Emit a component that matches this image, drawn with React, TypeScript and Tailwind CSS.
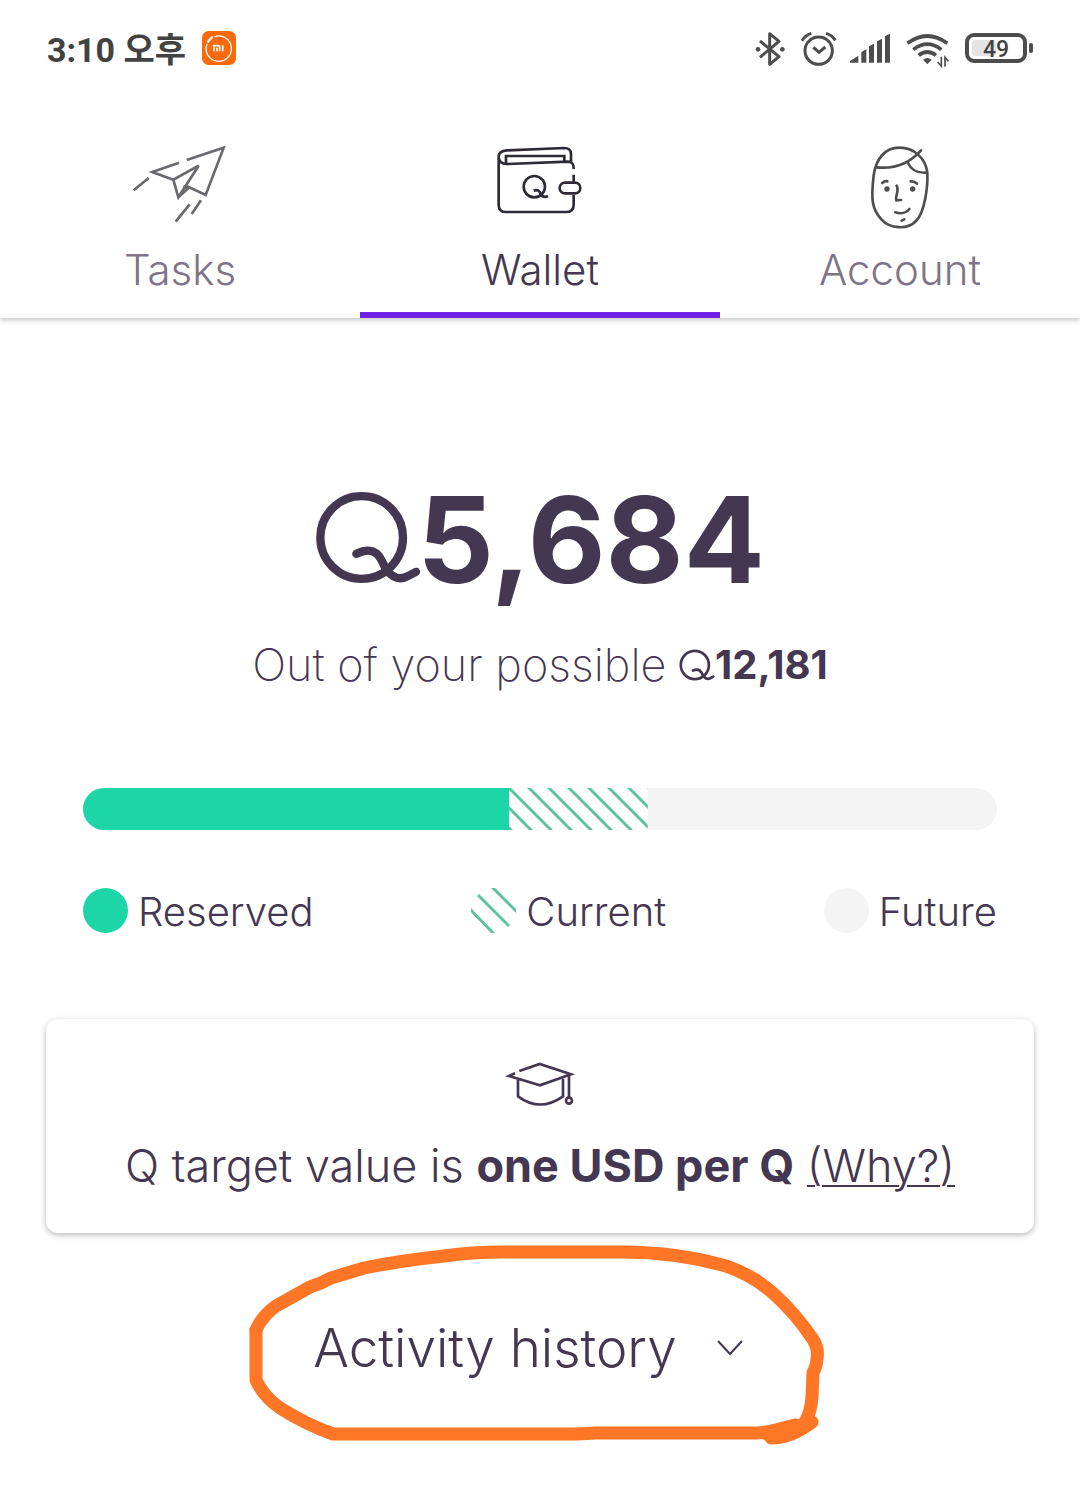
import React, { useState } from 'react';

const TOTAL = 12181;
const RESERVED = 5684;
const CURRENT = 1850;

const percent = (value: number) => `${(value / TOTAL) * 100}%`;

/* Currency mark, scales with its own height */
const QMark = ({ className, stroke }: { className: string; stroke: number }) => (
  <svg viewBox="42 50 318 278" className={className} fill="none" stroke="currentColor" strokeWidth={stroke} strokeLinecap="round" role="img" aria-label="Q">
    <circle cx="182" cy="189" r="124" />
    <path d="M166 238C205 220 228 228 243 260C262 305 290 322 322 304L345 292" />
  </svg>
);

const PlaneIcon = () => (
  <svg viewBox="0 0 360 300" className="w-[120px] h-[100px]" fill="none" stroke="#6b696f" strokeWidth="8" aria-hidden="true">
    <path d="M200 75L311 38L257 180L201 154" />
    <path d="M177 83L97 111L160 134L236 92L175 187L160 134" />
    <path d="M175 187L203 162L190 153" />
    <path d="M86 129L41 166M209 208L167 260M243 196L215 237" />
  </svg>
);

const WalletIcon = () => (
  <svg viewBox="0 0 330 270" className="w-[110px] h-[90px]" fill="none" stroke="#2f2a35" strokeWidth="8" aria-hidden="true">
    <path d="M41 66V209Q41 231 63 231H243Q266 231 266 209V180M266 143V119M266 102Q267 80 248 80L66 87Q41 87 41 66Q41 47 66 46L238 39Q257 39 258 56V80" />
    <path d="M63 84V63H238V78" />
    <rect x="224" y="143" width="62" height="32" rx="16" />
    <circle cx="148" cy="155" r="32" />
    <path d="M146 167C158 162 164 168 167 177Q174 190 189 183" />
  </svg>
);

const FaceIcon = () => (
  <svg viewBox="0 0 270 315" className="w-[90px] h-[105px]" fill="none" stroke="#4f4d50" strokeWidth="8" strokeLinecap="round" aria-hidden="true">
    <path d="M134 38C88 38 63 73 56 121C47 196 52 223 79 253C105 282 158 285 183 258C209 233 219 155 217 112C211 69 177 38 134 38Z" />
    <path d="M65 97C111 102 158 91 198 46M158 82C168 105 184 115 215 113" />
    <path d="M82 144Q89 137 97 139M167 139Q179 138 186 146M125 152C134 168 119 184 124 196L138 195M121 232C139 238 155 233 163 222M140 257L148 253" />
    <circle cx="96" cy="162" r="8" fill="#4f4d50" stroke="none" />
    <circle cx="173" cy="162" r="8" fill="#4f4d50" stroke="none" />
  </svg>
);

const CapIcon = () => (
  <svg viewBox="0 0 300 210" className="w-[100px] h-[70px]" fill="none" stroke="#443751" strokeWidth="8" aria-hidden="true">
    <path d="M88 63L149 42L243 73L150 106L57 78L75 70" />
    <path d="M84 90V139Q150 188 219 139V86M237 77V141" />
    <circle cx="237" cy="152" r="9" />
  </svg>
);

const StatusIcons = () => (
  <svg viewBox="0 0 627 195" className="w-[209px] h-[65px]" fill="none" stroke="#4d4d4d" strokeWidth="9" aria-hidden="true">
    {/* bluetooth */}
    <path d="M60 75L117 122L89 145V53L117 76L60 124" strokeLinejoin="round" />
    <circle cx="54" cy="100" r="7" fill="#4d4d4d" stroke="none" />
    <circle cx="127" cy="100" r="7" fill="#4d4d4d" stroke="none" />
    {/* alarm */}
    <circle cx="236" cy="104" r="41" />
    <path d="M220 94L237 109L256 93M186 74Q196 57 214 52M258 52Q276 57 286 73" />
    {/* signal */}
    <path
      d="M330 140V135L355 119V140ZM364 140V108L379 100V140ZM387 140V91L402 83V140ZM411 140V76L426 68V140ZM435 140V60L450 53V140Z"
      fill="#4d4d4d"
      stroke="none"
    />
    {/* wifi with data arrows */}
    <path d="M502 82Q562 38 622 82M520 101Q562 68 604 101M536 118Q562 98 588 118" strokeWidth="11" />
    <path d="M549 131Q562 121 575 131L562 145Z" fill="#4d4d4d" stroke="none" />
    <path d="M604 122V150L593 138M615 152V124L625 136" strokeWidth="5" />
  </svg>
);

const Stripes = () => (
  <svg className="w-full h-full" aria-hidden="true">
    <defs>
      <pattern id="stripes" width="20" height="20" patternUnits="userSpaceOnUse">
        <path d="M-5 -5L25 25M15 -5L25 5M-5 15L5 25" stroke="#5fc29f" strokeWidth="3" />
      </pattern>
    </defs>
    <rect width="100%" height="100%" fill="url(#stripes)" />
  </svg>
);

const tabs = [
  { name: 'Tasks', icon: <PlaneIcon /> },
  { name: 'Wallet', icon: <WalletIcon /> },
  { name: 'Account', icon: <FaceIcon /> },
];

const App = () => {
  const [activeTab, setActiveTab] = useState('Wallet');
  const [showHistory, setShowHistory] = useState(false);

  return (
    <div className="min-h-screen bg-white text-[#443751] font-['Inter',sans-serif]">
      {/* Status bar */}
      <div className="h-24 px-[47px] flex items-center justify-between text-[#424242]">
        <div className="flex items-center gap-4">
          <span className="pt-1 text-[34px] leading-[48px] font-bold font-['Roboto','Noto_Sans_CJK_KR',sans-serif]">
            3:10 오후
          </span>
          <svg viewBox="0 0 102 102" className="w-[34px] h-[34px]" fill="none" stroke="#fff" aria-hidden="true">
            <rect width="102" height="102" rx="20" fill="#fb6a0a" stroke="none" />
            <path d="M38 17A38 38 0 1 1 15 39" strokeWidth="4" />
            <path d="M18 32L30 19" strokeWidth="7" strokeLinecap="round" />
            <path d="M36 61V44H48Q53 44 53 49V61M45 50V61M62 43V61" strokeWidth="5" />
          </svg>
        </div>
        <div className="flex items-center gap-4">
          <StatusIcons />
          <div className="flex items-center gap-[2px]">
            <div className="w-[62px] h-[30px] rounded-[9px] border-4 border-[#4d4d4d] p-[3px]">
              <div className="w-6 h-4 bg-[#e4e4e4] rounded-sm">
                <span className="block w-12 text-center text-[23px] leading-5 font-medium font-['Roboto',sans-serif]">49</span>
              </div>
            </div>
            <div className="w-1 h-[10px] rounded-full bg-[#4d4d4d]" />
          </div>
        </div>
      </div>

      {/* Tabs */}
      <nav className="grid grid-cols-3 shadow-[0_3px_4px_rgba(0,0,0,0.18)]">
        {tabs.map((tab) => (
          <button
            key={tab.name}
            type="button"
            onClick={() => setActiveTab(tab.name)}
            className={`h-[222px] pt-[39px] flex flex-col items-center border-b-6 ${activeTab === tab.name ? 'border-[#7421e6] text-[#443751]' : 'border-transparent text-[#7d7585]'}`}
          >
            <span className="h-[105px]">{tab.icon}</span>
            <span className="mt-[6px] text-[42px] leading-[48px] font-light">{tab.name}</span>
          </button>
        ))}
      </nav>

      <main>
        {/* Balance */}
        <h1 className="mt-[162px] flex justify-center text-[120px] leading-[120px] font-bold">
          <QMark className="w-[106px] h-[93px] mt-[11px]" stroke={25} />
          <span className="-ml-1">5,684</span>
        </h1>
        <p className="mt-[35px] flex justify-center text-[45px] leading-[60px] font-extralight whitespace-pre">
          Out of your possible{' '}
          <QMark className="w-9 h-8 mt-[14px]" stroke={24} />
          <span className="text-[40px] font-bold">12,181</span>
        </p>

        <div className="mx-[83px] mt-[93px] h-[42px] flex rounded-full overflow-hidden bg-[#f4f4f4]">
          <div className="bg-[#1dd6a7]" style={{ width: percent(RESERVED) }} />
          <div className="bg-white" style={{ width: percent(CURRENT) }}>
            <Stripes />
          </div>
        </div>

        <ul className="mx-[83px] mt-[58px] flex justify-between text-[40px] leading-[48px] font-light">
          <li className="flex gap-[10px]">
            <span className="size-[45px] rounded-full bg-[#1dd6a7]" />
            Reserved
          </li>
          <li className="flex gap-[10px]">
            <svg viewBox="0 0 45 45" className="size-[45px]" stroke="#5fc29f" strokeWidth="3" aria-hidden="true">
              <path d="M-2 20L24 47M7 7L38 38M20 -2L47 25" />
            </svg>
            Current
          </li>
          <li className="flex gap-[10px]">
            <span className="size-[45px] rounded-full bg-[#f4f4f4]" />
            Future
          </li>
        </ul>

        {/* Target value card */}
        <section className="mx-[46px] mt-[83px] h-[214px] pt-[31px] flex flex-col items-center rounded-xl shadow-[0_2px_6px_rgba(0,0,0,0.28)]">
          <CapIcon />
          <p className="mt-4 text-[45px] leading-[60px] font-light whitespace-nowrap">
            Q target value is <strong className="font-bold">one USD per Q</strong>{' '}
            <a href="#why" className="underline decoration-2 underline-offset-3">(Why?)</a>
          </p>
        </section>

        <div className="relative h-[276px] pt-[85px] flex flex-col items-center">
          <button
            type="button"
            aria-expanded={showHistory}
            onClick={() => setShowHistory(!showHistory)}
            className="flex items-center gap-10 mr-6 text-[53px] leading-[60px] font-light"
          >
            Activity history
            <svg viewBox="0 0 26 16" className="w-[26px] h-4" fill="none" stroke="currentColor" strokeWidth="2" aria-hidden="true">
              <path d="M1 1L13 14L25 1" />
            </svg>
          </button>
          {/* Hand-drawn highlight */}
          <svg
            viewBox="0 0 600 230"
            className="absolute -top-[3px] left-1/2 -translate-x-1/2 w-[600px] h-[230px] pointer-events-none"
            fill="none"
            stroke="#ff7626"
            strokeWidth="13"
            strokeLinecap="round"
            strokeLinejoin="round"
            aria-hidden="true"
          >
            <path d="M16 100Q22 86 36 76L70 57Q80 54 91 48L124 38Q158 31 204 26Q232 22 262 22H383Q436 22 486 36Q513 45 534 64Q555 83 572 108Q579 118 577 128Q577 135 573 143L572 167Q571 182 565 192" />
            <path d="M16 100V150Q23 166 40 178Q67 195 93 204H337L356 203H517Q543 201 572 192Q551 208 531 208" />
            <path d="M524 203L555 195L561 196L541 206Z" fill="#ff7626" />
          </svg>
        </div>
      </main>
    </div>
  );
};

export default App;
